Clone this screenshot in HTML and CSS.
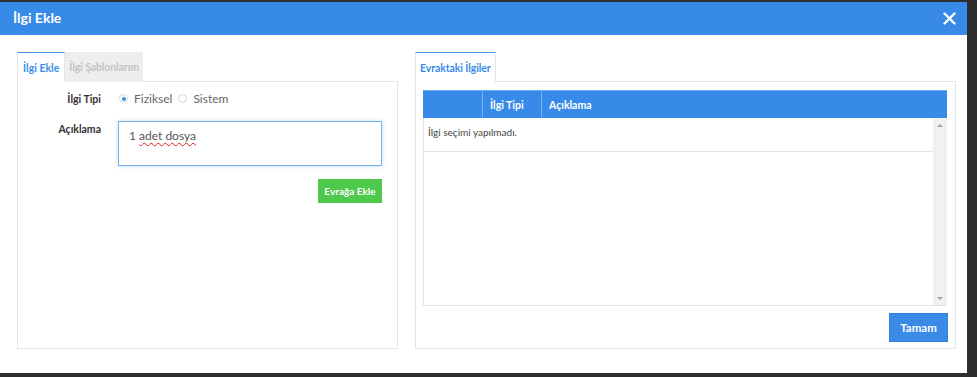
FILE: index.html
```html
<!DOCTYPE html>
<html lang="tr">
<head>
<meta charset="utf-8">
<title>İlgi Ekle</title>
<link rel="stylesheet" href="styles.css">
</head>
<body>
<div class="modal">
  <div class="modal-header">
    <span class="modal-title">İlgi Ekle</span>
    <span class="close">
      <svg width="13" height="13" viewBox="0 0 13 13"><path d="M1.5 1.5 L11.5 11.5 M11.5 1.5 L1.5 11.5" stroke="#fff" stroke-width="2.4" stroke-linecap="round"/></svg>
    </span>
  </div>
  <div class="modal-body">
    <div class="col col-left">
      <div class="tabs">
        <div class="tab active">İlgi Ekle</div>
        <div class="tab inactive">İlgi Şablonlarım</div>
      </div>
      <div class="panel panel-left">
        <div class="form-row row-type">
          <div class="label">İlgi Tipi</div>
          <div class="control radios">
            <span class="radio checked"></span><span class="radio-text">Fiziksel</span>
            <span class="radio"></span><span class="radio-text">Sistem</span>
          </div>
        </div>
        <div class="form-row row-desc">
          <div class="label">Açıklama</div>
          <div class="control">
            <div class="textarea"><span class="typed">1 <span class="spell">adet dosya</span></span></div>
          </div>
        </div>
        <div class="actions">
          <button class="btn btn-green">Evrağa Ekle</button>
        </div>
      </div>
    </div>
    <div class="col col-right">
      <div class="tabs">
        <div class="tab active tab-wide">Evraktaki İlgiler</div>
      </div>
      <div class="panel panel-right">
        <div class="table">
          <div class="thead">
            <div class="th th-1"></div>
            <div class="th th-2">İlgi Tipi</div>
            <div class="th th-3">Açıklama</div>
          </div>
          <div class="tbody">
            <div class="rows">
              <div class="row-empty">İlgi seçimi yapılmadı.</div>
            </div>
            <div class="scrollbar">
              <span class="arrow up"></span>
              <span class="arrow down"></span>
            </div>
          </div>
        </div>
        <div class="footer">
          <button class="btn btn-blue">Tamam</button>
        </div>
      </div>
    </div>
  </div>
</div>
</body>
</html>
```

FILE: styles.css
```css
html, body {
  margin: 0;
  padding: 0;
  background: #2e2e2e;
  height: 377px;
  overflow: hidden;
}
body {
  font-family: Lato, "Open Sans", sans-serif;
  padding-top: 2px;
}
.modal {
  width: 967px;
  height: 371px;
  background: #fff;
  display: flex;
  flex-direction: column;
}
.modal-header {
  height: 33px;
  background: #378ae8;
  display: flex;
  align-items: center;
  justify-content: space-between;
  padding: 0 11px 0 13px;
  box-sizing: border-box;
}
.modal-title {
  color: #fff;
  font-weight: bold;
  font-size: 14px;
  margin-top: -2px;
}
.close {
  display: flex;
  width: 13px;
  height: 13px;
}
.modal-body {
  display: flex;
  padding: 17px 10px 0 17px;
  gap: 17px;
}
.col {
  display: flex;
  flex-direction: column;
}
.col-left { width: 381px; }
.col-right { width: 541px; }
.tabs {
  display: flex;
  height: 30px;
  margin-bottom: -1px;
  position: relative;
  z-index: 1;
}
.tab {
  box-sizing: border-box;
  height: 31px;
  display: flex;
  align-items: center;
  font-size: 10.5px;
  font-weight: bold;
  padding: 0 5px;
}
.tab.active {
  color: #3a8ce8;
  background: #fff;
  border: 1px solid #e6e6e6;
  border-top: 1px solid #4a95ea;
  border-bottom-color: #fff;
}
.tab.inactive {
  color: #c4c4c4;
  background: #eeeeee;
  height: 30px;
  padding: 0 4px;
  letter-spacing: -0.1px;
}
.tab-wide { padding: 0 4px; letter-spacing: -0.1px; }
.panel {
  border: 1px solid #e6e6e6;
  box-sizing: border-box;
  height: 268px;
}
.panel-left { padding: 0 15px 0 0; }
.form-row {
  display: flex;
}
.label {
  width: 83px;
  text-align: right;
  font-size: 10.5px;
  font-weight: bold;
  color: #333;
  flex: none;
}
.control {
  margin-left: 17px;
  flex: 1;
}
.row-type {
  margin-top: 8px;
  height: 17px;
  align-items: center;
}
.radios {
  display: flex;
  align-items: center;
  font-size: 12px;
  color: #666;
}
.radio {
  width: 9px;
  height: 9px;
  border: 1px solid #d6d6d6;
  border-radius: 50%;
  box-sizing: border-box;
  margin: 0 6px 0 1px;
  position: relative;
}
.radio.checked::after {
  content: "";
  position: absolute;
  left: 1.5px;
  top: 1.5px;
  width: 4px;
  height: 4px;
  border-radius: 50%;
  background: #3a8ce8;
}
.radio-text { margin-right: 5px; }
.row-desc {
  margin-top: 14px;
}
.row-desc .label {
  padding-top: 2px;
}
.textarea {
  height: 45px;
  border: 1px solid #77b3ea;
  box-sizing: border-box;
  box-shadow: 0 0 4px rgba(102,175,233,0.45);
  padding: 6px 10px;
  font-size: 12px;
  color: #555;
}
.spell {
  text-decoration: underline wavy #e02020;
  text-decoration-thickness: 1px;
  text-underline-offset: 2px;
}
.actions {
  display: flex;
  justify-content: flex-end;
  margin-top: 13px;
}
.btn {
  border: none;
  color: #fff;
  font-family: Lato, "Open Sans", sans-serif;
  font-weight: bold;
  cursor: pointer;
  padding: 0;
}
.btn-green {
  width: 64px;
  height: 24px;
  background: #4dc94b;
  font-size: 10px;
}
.panel-right {
  padding: 8px 8px 0 7px;
  display: flex;
  flex-direction: column;
}
.table {
  display: flex;
  flex-direction: column;
}
.thead {
  display: flex;
  height: 28px;
  background: #378ae8;
  border-top: 1px solid #6aa8ee;
  box-sizing: border-box;
}
.th {
  color: #fff;
  font-size: 10.5px;
  font-weight: bold;
  display: flex;
  align-items: center;
  padding-left: 7px;
  box-sizing: border-box;
}
.th-1 { width: 60px; border-right: 1px solid #7ab1ef; }
.th-2 { width: 59px; border-right: 1px solid #7ab1ef; }
.th-3 { flex: 1; }
.tbody {
  display: flex;
  height: 188px;
  border-left: 1px solid #e3e3e3;
  border-bottom: 1px solid #e3e3e3;
  box-sizing: border-box;
}
.rows { flex: 1; }
.row-empty {
  height: 34px;
  border-bottom: 1px solid #e3e3e3;
  box-sizing: border-box;
  font-size: 10px;
  color: #444;
  padding: 8px 0 0 4px;
}
.scrollbar {
  width: 14px;
  background: #f1f1f1;
  display: flex;
  flex-direction: column;
  justify-content: space-between;
  align-items: center;
  padding: 6px 0 5px;
  box-sizing: border-box;
}
.arrow {
  width: 0;
  height: 0;
  border-left: 3px solid transparent;
  border-right: 3px solid transparent;
}
.arrow.up { border-bottom: 3px solid #a0a0a0; }
.arrow.down { border-top: 3px solid #a0a0a0; }
.footer {
  display: flex;
  justify-content: flex-end;
  margin-top: 7px;
  margin-right: -1px;
}
.btn-blue {
  width: 59px;
  height: 29px;
  background: #3a8ae8;
  border: 1px solid #2f7fdb;
  font-size: 11.5px;
}
```
